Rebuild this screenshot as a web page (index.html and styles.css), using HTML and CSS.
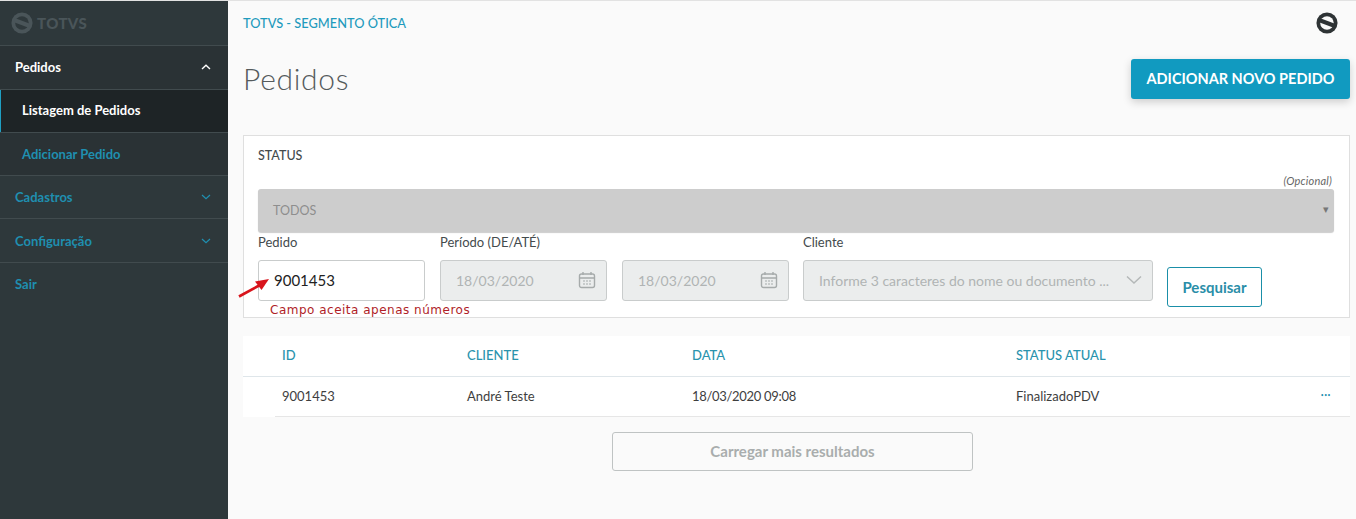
FILE: index.html
```html
<!DOCTYPE html>
<html lang="pt">
<head>
<meta charset="utf-8">
<title>Pedidos</title>
<link rel="stylesheet" href="styles.css">
</head>
<body>
<div class="app">
  <aside class="sidebar">
    <div class="logo">
      <svg class="logo-icon" viewBox="0 0 24 24" width="22" height="22"><circle cx="12" cy="12" r="11.5" fill="#4a5559"/><circle cx="12" cy="12" r="7.4" fill="#2f393c"/><path d="M4 6.5L20 12.5V17.5L4 11.5Z" fill="#4a5559"/></svg>
      <span class="logo-text">TOTVS</span>
    </div>
    <nav class="menu">
      <div class="item open h44"><span>Pedidos</span><svg class="chev" viewBox="0 0 10 6" width="10" height="6"><path d="M1 5L5 1.3L9 5" fill="none" stroke="#fff" stroke-width="1.4"/></svg></div>
      <div class="sub active">Listagem de Pedidos</div>
      <div class="sub link h44">Adicionar Pedido</div>
      <div class="item"><span>Cadastros</span><svg class="chev" viewBox="0 0 10 6" width="10" height="6"><path d="M1 1L5 4.7L9 1" fill="none" stroke="#1f8fb0" stroke-width="1.2"/></svg></div>
      <div class="item h44"><span>Configuração</span><svg class="chev" viewBox="0 0 10 6" width="10" height="6"><path d="M1 1L5 4.7L9 1" fill="none" stroke="#1f8fb0" stroke-width="1.2"/></svg></div>
      <div class="item last"><span>Sair</span></div>
    </nav>
  </aside>
  <main class="main">
    <div class="topbar">
      <span class="crumb">TOTVS - SEGMENTO ÓTICA</span>
      <svg viewBox="0 0 24 24" width="22" height="22"><circle cx="12" cy="12" r="11.5" fill="#2e3335"/><circle cx="12" cy="12" r="7.4" fill="#fafafa"/><path d="M4 6.5L20 12.5V17.5L4 11.5Z" fill="#2e3335"/></svg>
    </div>
    <div class="title-row">
      <h1>Pedidos</h1>
      <button class="primary">ADICIONAR NOVO PEDIDO</button>
    </div>
    <section class="card">
      <div class="status-label">STATUS</div>
      <div class="optional">(Opcional)</div>
      <div class="select"><span>TODOS</span><span class="caret">▾</span></div>
      <div class="filters">
        <div class="field f-pedido">
          <label>Pedido</label>
          <div class="input active-input">9001453</div>
          <span class="hint">Campo aceita apenas números</span>
          <svg class="arrow" viewBox="0 0 34 22" width="34" height="22"><path d="M1 19.5L22 8" stroke="#d8141c" stroke-width="2.6"/><path d="M31 2L17 4.5L23.5 13Z" fill="#d8141c"/></svg>
        </div>
        <div class="field f-date">
          <label>Período (DE/ATÉ)</label>
          <div class="input disabled"><span>18/03/2020</span>
            <svg viewBox="0 0 18 18" width="18" height="18"><rect x="1.5" y="3" width="15" height="13.5" rx="2" fill="none" stroke="#a6abab" stroke-width="1.4"/><path d="M1.5 7H16.5M5 1V4M13 1V4" stroke="#a6abab" stroke-width="1.4"/><path d="M5 10H7M8 10H10M11 10H13M5 13H7M8 13H10M11 13H13" stroke="#a6abab" stroke-width="1.2"/></svg>
          </div>
        </div>
        <div class="field f-date f-date-end">
          <label class="blank">&nbsp;</label>
          <div class="input disabled"><span>18/03/2020</span>
            <svg viewBox="0 0 18 18" width="18" height="18"><rect x="1.5" y="3" width="15" height="13.5" rx="2" fill="none" stroke="#a6abab" stroke-width="1.4"/><path d="M1.5 7H16.5M5 1V4M13 1V4" stroke="#a6abab" stroke-width="1.4"/><path d="M5 10H7M8 10H10M11 10H13M5 13H7M8 13H10M11 13H13" stroke="#a6abab" stroke-width="1.2"/></svg>
          </div>
        </div>
        <div class="field f-client">
          <label>Cliente</label>
          <div class="input disabled"><span>Informe 3 caracteres do nome ou documento ...</span>
            <svg viewBox="0 0 16 10" width="16" height="10"><path d="M1 1.5L8 8L15 1.5" fill="none" stroke="#b4b8b8" stroke-width="1.5"/></svg>
          </div>
        </div>
        <button class="outline">Pesquisar</button>
      </div>
    </section>
    <section class="table">
      <div class="row head">
        <span class="c-id">ID</span><span class="c-cli">CLIENTE</span><span class="c-date">DATA</span><span class="c-st">STATUS ATUAL</span>
      </div>
      <div class="row body">
        <span class="c-id">9001453</span><span class="c-cli">André Teste</span><span class="c-date">18/03/2020 09:08</span><span class="c-st">FinalizadoPDV</span><span class="dots">•••</span>
      </div>
    </section>
    <div class="more"><button class="load">Carregar mais resultados</button></div>
  </main>
</div>
</body>
</html>
```
FILE: styles.css
```css
* { box-sizing: border-box; }
html, body { margin: 0; height: 100%; overflow: hidden; }
body { font-family: "Lato", "Open Sans", sans-serif; background: #fafafa; color: #3a4143; }
.app { display: flex; height: 519px; border-top: 1px solid #e2e2e2; }
.sidebar { width: 228px; flex: none; background: #2e383b; font-weight: 700; font-size: 13px; }
.logo { height: 44px; display: flex; align-items: center; gap: 4px; padding: 0 0 0 11px; }
.logo-text { color: #4a5559; font-size: 15px; font-weight: 900; letter-spacing: .4px; }
.menu > div { border-top: 1px solid #414b4e; }
.item { height: 43px; display: flex; align-items: center; justify-content: space-between; padding: 0 17px 0 15px; color: #1f8fb0; }
.h44 { height: 44px; }
.item.last { height: 42px; }
.item.open { color: #fff; background: #2a3235; padding-bottom: 2px; }
.sub { height: 43px; display: flex; align-items: center; padding-left: 22px; }
.sub.active { background: #1e2426; color: #fff; box-shadow: inset 1px 0 0 #1f9fc2; padding-bottom: 2px; }
.sub.link { color: #1f8fb0; background: #2a3235; }
.main { flex: 1; min-width: 0; padding: 0 6px 0 15px; }
.topbar { height: 44px; display: flex; align-items: center; justify-content: space-between; padding-right: 12px; }
.crumb { color: #1f9bbd; font-size: 12.8px; font-weight: 500; }
.title-row { height: 90px; display: flex; justify-content: space-between; padding-top: 14px; }
h1 { margin: -2px 0 0; font-size: 30px; font-weight: 300; line-height: 42px; color: #555b5d; letter-spacing: .7px; }
.primary { width: 219px; height: 40px; border: 0; border-radius: 3px; background: #119ac0; color: #fff; font: 700 14.5px "Lato", sans-serif; box-shadow: 0 3px 8px rgba(0,0,0,.18); padding-bottom: 2px; }
.card { height: 183px; background: #fff; border: 1px solid #dfdfdf; padding: 0 15px 0 14px; position: relative; }
.status-label { font-size: 12.5px; color: #444b4d; font-weight: 500; height: 38px; line-height: 39px; }
.optional { text-align: right; font-size: 11px; font-style: italic; color: #666; height: 15px; line-height: 14px; padding-right: 2px; letter-spacing: .2px; }
.select { height: 43px; background: #cdcdcd; border-radius: 3px; display: flex; align-items: center; justify-content: space-between; padding: 0 5px 0 15px; font-size: 12.5px; color: #8e8e8e; box-shadow: 0 1px 1px rgba(0,0,0,.2); }
.caret { font-size: 11px; color: #777; margin-bottom: 3px; }
.filters { display: flex; align-items: flex-start; margin-top: 1px; }
.field { display: flex; flex-direction: column; position: relative; }
.field label { font-size: 13px; color: #444b4d; height: 27px; line-height: 18px; }
.f-pedido { width: 167px; margin-right: 15px; }
.f-date { width: 167px; margin-right: 15px; }
.f-date-end { margin-right: 14px; }
.f-client { width: 350px; margin-right: 14px; }
.input { height: 41px; border: 1px solid #c9cccc; border-radius: 3px; display: flex; align-items: center; justify-content: space-between; padding: 0 10px 1px 15px; font-size: 15px; }
.active-input { color: #222; background: #fff; }
.disabled { background: #ebeded; color: #b0b4b4; font-size: 14px; }
.f-client .disabled span { white-space: nowrap; }
.hint { position: absolute; left: 12px; top: 70px; white-space: nowrap; font: 12px "DejaVu Sans", sans-serif; color: #b01e28; letter-spacing: .5px; }
.arrow { position: absolute; left: -20px; top: 44px; }
.outline { width: 95px; height: 40px; margin-top: 34px; border: 1px solid #1a8fa8; border-radius: 3px; background: #fff; color: #2a8ea8; font: 700 15px "Lato", sans-serif; }
.table { margin-top: 18px; height: 81px; background: #fff; }
.row { display: flex; align-items: center; padding-left: 39px; font-size: 13px; }
.head { height: 41px; padding-bottom: 3px; color: #2a93ad; font-weight: 500; border-bottom: 1px solid #dfe6ea; }
.body { height: 40px; margin-left: 32px; padding-left: 7px; padding-bottom: 2px; color: #3e3e3e; border-bottom: 1px solid #e6e6e6; position: relative; }
.c-id { width: 185px; }
.c-cli { width: 225px; }
.c-date { width: 324px; }
.body .c-date { letter-spacing: -.3px; }
.c-st { flex: 1; }
.dots { position: absolute; right: 19px; top: 15px; font-size: 5px; color: #1f8fb0; letter-spacing: .5px; }
.more { display: flex; justify-content: center; margin-top: 15px; padding-right: 8px; }
.load { width: 361px; height: 39px; border: 1px solid #bfc3c3; border-radius: 3px; background: #fafafa; color: #a9adad; font: 700 15px "Lato", sans-serif; padding-bottom: 2px; }
```
